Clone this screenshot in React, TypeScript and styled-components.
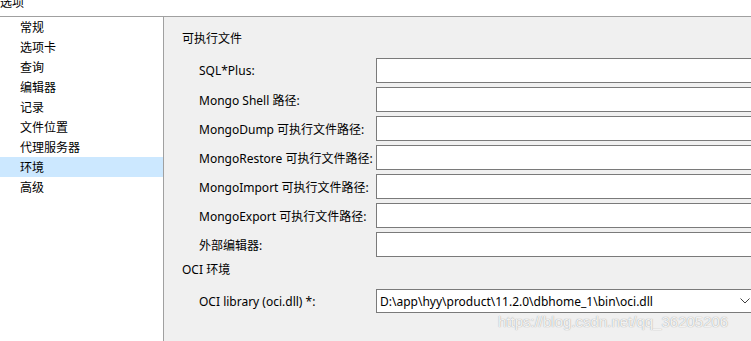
import React from 'react';
import styled, { createGlobalStyle } from 'styled-components';

const GlobalStyle = createGlobalStyle`
  html, body {
    margin: 0;
    padding: 0;
    background: #f0f0f0;
  }
  body {
    font-family: 'Noto Sans', 'Noto Sans CJK SC', sans-serif;
    font-size: 12px;
    color: #000;
  }
`;

const navItems = ['常规', '选项卡', '查询', '编辑器', '记录', '文件位置', '代理服务器', '环境', '高级'];

const exeFields = [
  'SQL*Plus:',
  'Mongo Shell 路径:',
  'MongoDump 可执行文件路径:',
  'MongoRestore 可执行文件路径:',
  'MongoImport 可执行文件路径:',
  'MongoExport 可执行文件路径:',
  '外部编辑器:',
];

const App = () => {
  return (
    <Window>
      <GlobalStyle />
      <TitleBar>
        <TitleText>选项</TitleText>
      </TitleBar>
      <Body>
        <Sidebar>
          {navItems.map((item) => (
            <NavItem key={item} active={item === '环境'}>
              {item}
            </NavItem>
          ))}
        </Sidebar>
        <Content>
          <SectionTitle>可执行文件</SectionTitle>
          <FieldList>
            {exeFields.map((label) => (
              <FieldRow key={label}>
                <Label>{label}</Label>
                <TextBox />
              </FieldRow>
            ))}
          </FieldList>
          <SectionTitle second>OCI 环境</SectionTitle>
          <FieldRow>
            <Label>OCI library (oci.dll) *:</Label>
            <ComboBox>
              <ComboText>D:\app\hyy\product\11.2.0\dbhome_1\bin\oci.dll</ComboText>
              <svg width="10" height="6" viewBox="0 0 10 6">
                <path d="M0.5 0.5 L5 5 L9.5 0.5" fill="none" stroke="#404040" strokeWidth="1" />
              </svg>
            </ComboBox>
          </FieldRow>
          <Watermark>https://blog.csdn.net/qq_36205206</Watermark>
        </Content>
      </Body>
    </Window>
  );
};

export default App;

const Window = styled.div`
  display: flex;
  flex-direction: column;
  width: 751px;
  height: 341px;
  overflow: hidden;
`;

const TitleBar = styled.div`
  height: 17px;
  background: #fff;
  border-bottom: 1px solid #a0a0a0;
  overflow: hidden;
  box-sizing: border-box;
`;

const TitleText = styled.div`
  margin-top: -5px;
  line-height: 16px;
  font-size: 12px;
`;

const Body = styled.div`
  flex: 1;
  display: flex;
`;

const Sidebar = styled.div`
  width: 163px;
  background: #fff;
  border-right: 1px solid #a0a0a0;
  display: flex;
  flex-direction: column;
`;

const NavItem = styled.div<{ active?: boolean }>`
  height: 20px;
  line-height: 21px;
  padding-left: 20px;
  background: ${({ active }) => (active ? '#cce8ff' : 'transparent')};
`;

const Content = styled.div`
  position: relative;
  flex: 1;
  padding: 13px 0 0 18px;
  display: flex;
  flex-direction: column;
`;

const SectionTitle = styled.div<{ second?: boolean }>`
  height: 18px;
  line-height: 18px;
  margin-top: ${({ second }) => (second ? '4px' : '0')};
  margin-bottom: 10px;
`;

const FieldList = styled.div`
  display: flex;
  flex-direction: column;
  gap: 4px;
`;

const FieldRow = styled.div`
  display: flex;
  align-items: center;
  padding-left: 17px;
`;

const Label = styled.div`
  width: 177px;
  flex-shrink: 0;
  white-space: nowrap;
  overflow: hidden;
`;

const TextBox = styled.div`
  flex: 1;
  height: 25px;
  box-sizing: border-box;
  background: #fff;
  border: 1px solid #7a7a7a;
  border-right: none;
`;

const ComboBox = styled.div`
  flex: 1;
  height: 24px;
  box-sizing: border-box;
  background: #fff;
  border: 1px solid #7a7a7a;
  border-right: none;
  display: flex;
  align-items: center;
  justify-content: space-between;
  padding: 0 1px 0 3px;
`;

const ComboText = styled.span`
  white-space: nowrap;
  font-size: 12px;
`;

const Watermark = styled.div`
  position: absolute;
  left: 334px;
  top: 295px;
  font-family: 'Liberation Sans', Arial, sans-serif;
  font-size: 15px;
  line-height: 20px;
  color: rgba(255, 255, 255, 0.9);
  text-shadow: 0 0 1px rgba(90, 90, 90, 0.7);
  white-space: nowrap;
`;
